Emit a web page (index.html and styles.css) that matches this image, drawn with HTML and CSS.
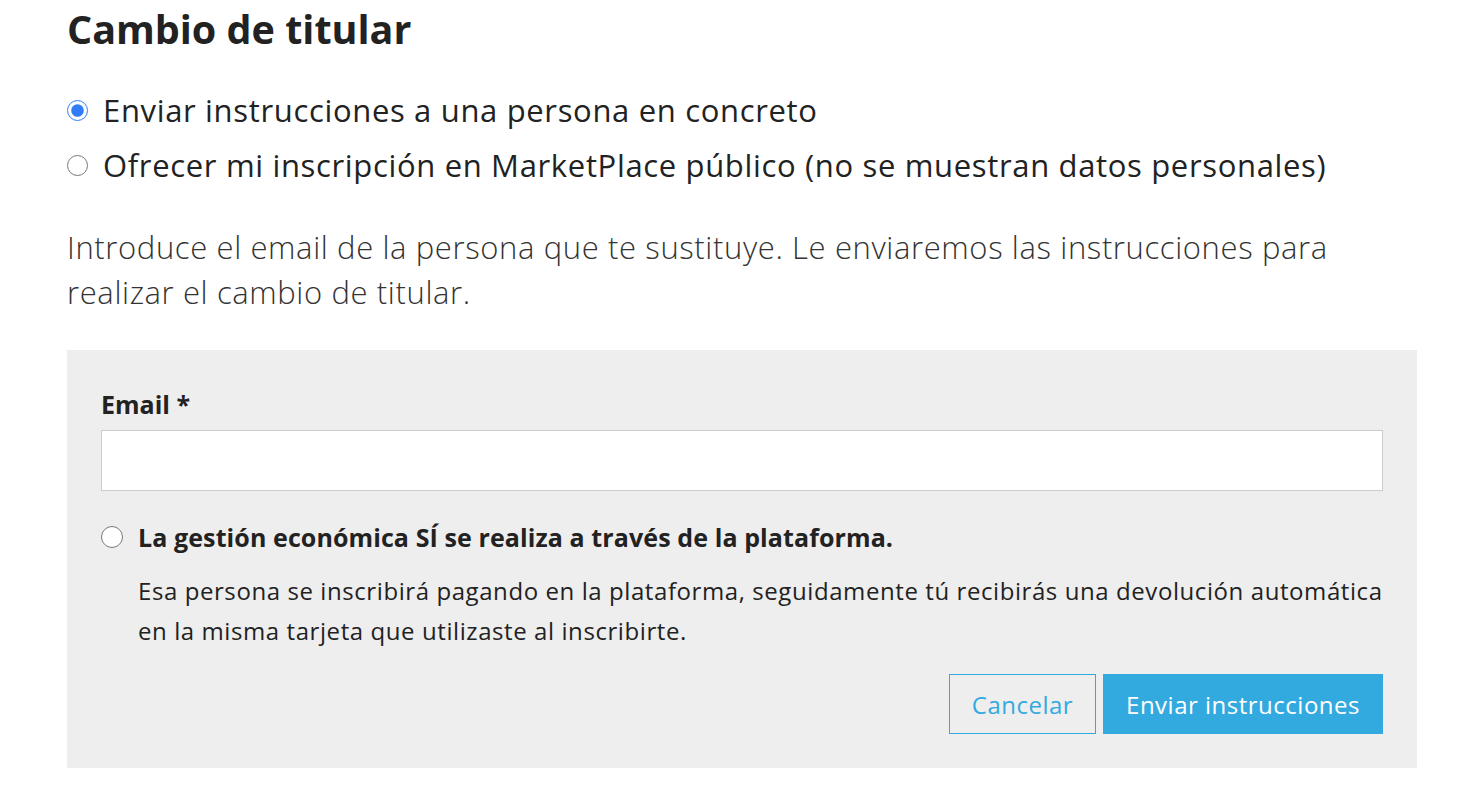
FILE: index.html
```html
<!DOCTYPE html>
<html lang="es">
<head>
<meta charset="utf-8">
<title>Cambio de titular</title>
<link rel="stylesheet" href="styles.css">
</head>
<body>
<main class="page">
  <h1 class="title">Cambio de titular</h1>
  <div class="options">
    <label class="option"><input type="radio" name="mode" checked><span>Enviar instrucciones a una persona en concreto</span></label>
    <label class="option"><input type="radio" name="mode"><span>Ofrecer mi inscripción en MarketPlace público (no se muestran datos personales)</span></label>
  </div>
  <p class="intro">Introduce el email de la persona que te sustituye. Le enviaremos las instrucciones para realizar el cambio de titular.</p>
  <form class="panel">
    <label class="field-label" for="email">Email *</label>
    <input class="field" id="email" type="email">
    <label class="check"><input type="radio" name="pay"><span>La gestión económica SÍ se realiza a través de la plataforma.</span></label>
    <p class="note">Esa persona se inscribirá pagando en la plataforma, seguidamente tú recibirás una devolución automática en la misma tarjeta que utilizaste al inscribirte.</p>
    <div class="actions">
      <button type="button" class="btn btn-outline">Cancelar</button>
      <button type="button" class="btn btn-primary">Enviar instrucciones</button>
    </div>
  </form>
</main>
</body>
</html>
```
FILE: styles.css
```css
* { box-sizing: border-box; }
html, body { margin: 0; padding: 0; background: #fff; }
body { font-family: "Open Sans", "Noto Sans", sans-serif; color: #222; }
.page { width: 1350px; margin-left: 67px; padding-top: 4px; }
.title { margin: 0; font-size: 39.5px; font-weight: 700; line-height: 50px; color: #222; }
.options { margin-top: 31px; display: flex; flex-direction: column; gap: 5px; }
.option { display: flex; align-items: center; font-size: 31px; letter-spacing: 0.66px; line-height: 50px; color: #222; }
.option input { margin: 0 15px 0 0; width: 21px; height: 21px; accent-color: #2f7cf6; }
.intro { margin: 35px 0 0; font-size: 31px; font-weight: 300; letter-spacing: 0.62px; line-height: 45px; color: #333; }
.panel { margin-top: 35px; background: #eeeeee; padding: 38px 34px 34px 34px; display: flex; flex-direction: column; }
.field-label { font-size: 25px; font-weight: 700; line-height: 32px; color: #222; }
.field { margin-top: 10px; height: 61px; border: 1px solid #cccccc; background: #fff; font: inherit; font-size: 22px; padding: 0 12px; }
.check { margin-top: 30px; display: flex; align-items: center; font-size: 25px; font-weight: 700; letter-spacing: 0.1px; line-height: 32px; color: #222; }
.check input { margin: 0 15px 0 0; width: 22px; height: 22px; }
.note { margin: 18px 0 0 37px; font-size: 24px; letter-spacing: 0.58px; line-height: 40px; color: #222; }
.actions { margin-top: 23px; display: flex; justify-content: flex-end; gap: 7px; }
.btn { height: 60px; font-family: inherit; font-size: 24px; letter-spacing: 0.5px; padding: 0; cursor: pointer; }
.btn-outline { background: transparent; border: 1px solid #33aadf; color: #33aadf; width: 147px; }
.btn-primary { background: #33aadf; border: 1px solid #33aadf; color: #fff; width: 280px; }
```
